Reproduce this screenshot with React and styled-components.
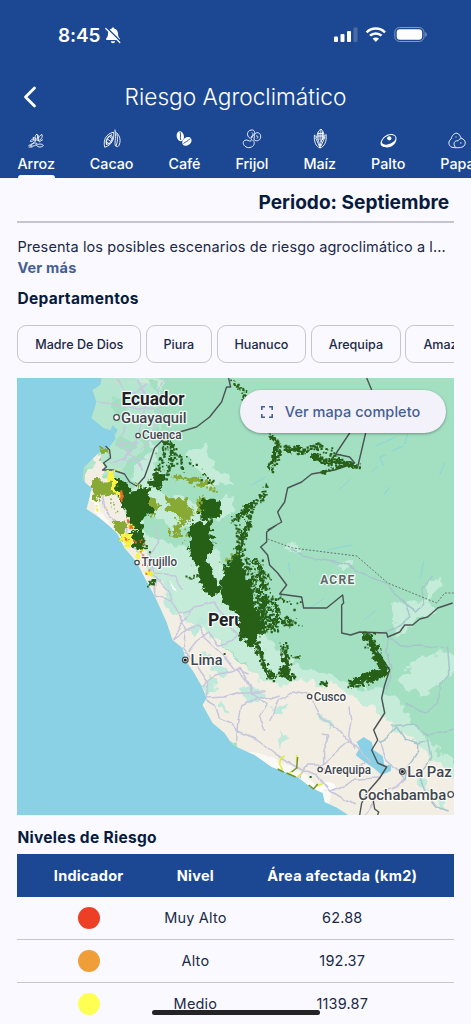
import styled, { createGlobalStyle } from "styled-components";

const crops = [
  { name: "Arroz", icon: "rice" },
  { name: "Cacao", icon: "cacao" },
  { name: "Café", icon: "coffee" },
  { name: "Frijol", icon: "bean" },
  { name: "Maíz", icon: "corn" },
  { name: "Palto", icon: "avocado" },
  { name: "Papa", icon: "potato" },
];

const departments = ["Madre De Dios", "Piura", "Huanuco", "Arequipa", "Amazonas"];

const levels = [
  { name: "Muy Alto", area: "62.88", color: "#ec3f25" },
  { name: "Alto", area: "192.37", color: "#f09e38" },
  { name: "Medio", area: "1139.87", color: "#ffff54" },
];

const icons = {
  rice: (
    <>
      <path d="M2.5 16.500c3-1 5-2.500 7-4.500M4.500 12.500c0-1.500 1.500-2.500 3.500-2.500-.5 2-2 3-3.500 2.500zM7 8.500c2 0 3 1.500 3 3.500-1.500 0-2.500-1.500-3-3.500zM10 10.500c-1.500-2-1-4 1-5.500 1.300 2 1 4-1 5.500zM12 12c0-3.500 1.500-5.500 4-6.500.8 3-.8 5-4 6.500zM4.500 17c2-3 4.500-3.500 6.500-2.500-1 2-3.500 3-6.500 2.500zM10.500 16.500c2-2 5-2 7 0-2 2-5 2-7 0zM13 13l4-2.500" />
      <path d="M2.5 18h4M12 6v6" />
    </>
  ),
  cacao: (
    <>
      <path d="M2.800 18.300C.8 11 4 5 11.500 3.200c1.300 7-2 13-8.700 15.100z" />
      <path d="M4.500 16c-.5-5 1-8 5.500-10.500M4.500 13l3 2M5.500 10l4 3M7.500 7.500l3.500 3" />
      <ellipse cx="7.2" cy="10.9" rx="2.3" ry="4.6" transform="rotate(28 7.2 10.9)" />
      <path d="M13 2.500c4.500 3 6 8 4.500 12.500-.8 3-2.500 3.200-4 2-1.500-3 1-7-.5-14.500zM14.800 4.500c1 4.500 1 8-.8 12.500M13 2.500V.5" />
    </>
  ),
  coffee: (
    <>
      <ellipse cx="6.3" cy="7.2" rx="3.6" ry="5" fill="currentColor" stroke="none" transform="rotate(-12 6.3 7.2)" />
      <ellipse cx="12.9" cy="12.4" rx="5.1" ry="3.8" fill="currentColor" stroke="none" transform="rotate(-36 12.9 12.4)" />
      <path d="M6 3c1.500 3-.5 5 .8 8M9.500 14.500c2-2 4-1.500 6.500-5" stroke="#1c4893" strokeWidth=".9" />
    </>
  ),
  bean: (
    <>
      <path d="M8 9.300C4.500 7 4.500 2 9 1c4-.6 4.500 3.300 2.500 5.200-1 1-1 1.800-1.800 2.800M12.300 6.500c1-4 5.500-3.500 6.300 0 .8 5-4 6.300-6.300 4.500-1-1.500.6-2.500 0-4.500zM9.500 11.800c-3 1.200-4-2-7-.3-3.300 2.500.5 8 5.500 7 4.500-1 5-4.500 3.500-7" />
      <path d="M10 3.500c1.500 1 1 2.500 0 3.500-1.500 1-1.500 3.500.5 4.500M14 7c1.800-.8 2.500 1.500 1 2.500" />
    </>
  ),
  corn: (
    <>
      <path d="M7 9C6.800 5 8.300 1.500 11 0c2.500 2 3.600 6 2.800 10M8.900 3.500V11M10.900.5V13M12.600 3v8M7.500 4.500h6M7 7h7" />
      <path d="M4.500 6c3 2 5 7 5.500 13-4-1.500-6.300-6-5.500-13zM16 5.500c-3.800 3-5.500 7.500-6 13.500 4.500-1.500 7-6.500 6-13.500zM5.500 8.500l4 9M15 8l-4 9" />
    </>
  ),
  avocado: (
    <>
      <path
        fill="currentColor"
        fillRule="evenodd"
        stroke="none"
        d="M2.600 15c-.4-3.300 2.800-8 7.400-9.600C14 4 18.500 5.400 18.500 9.600c0 5-4.300 8.800-9.300 8.800-3.600 0-6.400-1.100-6.600-3.400zM4 12.600c-.6 2.600 2.500 3.500 5.500 2.800 4.300-.9 8-3.400 8-6.200 0-2.800-3.500-3.900-7-2.700C7.500 7.500 4.800 9.500 4 12.600z"
      />
      <circle cx="11.3" cy="9.3" r="2.1" fill="currentColor" stroke="none" />
    </>
  ),
  potato: (
    <>
      <path d="M5 18.300c-4-1.600-4-6.500-.8-8.300.6-3.500 3-6 5.600-5.800 2.700.3 3.200 3.300 4.700 5.300 4.300.8 5 6 1.500 8.300-3 1.200-7.500 1.200-11 .5z" />
      <path d="M8.500 18.300c-3-3.500-1-7 2.500-6.500 1-1.600 2.400-2.200 3.500-2.300M8.500 8h1M13 14h1.500" />
    </>
  ),
};

// Small seeded generator so the scattered cells stay the same between renders
function random(seed) {
  let s = seed;
  return () => {
    s = (s * 16807) % 2147483647;
    return s / 2147483647;
  };
}

function scatter(points, spread, amount, seed) {
  const next = random(seed);
  let d = "";
  for (let i = 0; i < points.length - 1; i++) {
    const [x1, y1] = points[i];
    const [x2, y2] = points[i + 1];
    const count = Math.hypot(x2 - x1, y2 - y1) * amount;
    for (let j = 0; j < count; j++) {
      const t = next();
      const x = x1 + (x2 - x1) * t + (next() + next() - 1) * spread;
      const y = y1 + (y2 - y1) * t + (next() + next() - 1) * spread;
      const size = 0.9 + next() * 1.5;
      d += `M${x.toFixed(1)} ${y.toFixed(1)}h${size.toFixed(1)}v${size.toFixed(1)}h-${size.toFixed(1)}z`;
    }
  }
  return d;
}

const forest = [
  scatter([[167, 437], [162, 455], [153, 482]], 6, 1.5, 11),
  scatter([[169, 440], [172, 458], [167, 474], [153, 484]], 4, 1.8, 12),
  scatter([[170, 442], [183, 470]], 4, 1.2, 13),
  scatter([[188, 460], [214, 486]], 6, 0.5, 14),
  scatter([[233, 380], [244, 392], [246, 415], [268, 430], [278, 446]], 3, 1.2, 16),
  scatter([[278, 444], [277, 456], [270, 469]], 4, 2, 17),
  scatter([[284, 446], [302, 451], [320, 444]], 4, 2.2, 18),
  scatter([[312, 454], [327, 461], [346, 462], [358, 468]], 4, 2.4, 19),
  scatter([[322, 446], [340, 458]], 5, 1, 20),
  scatter([[320, 472], [345, 464]], 2, 1.5, 21),
  scatter([[264, 486], [263, 497], [249, 506], [234, 518]], 4, 1.8, 22),
  scatter([[251, 508], [248, 524], [240, 542], [229, 563]], 4, 1.2, 23),
  scatter([[235, 517], [240, 540], [240, 562]], 5, 1.2, 24),
  scatter([[244, 560], [252, 580], [256, 610], [254, 640]], 8, 2, 26),
  scatter([[256, 560], [264, 582], [261, 603], [266, 628]], 9, 2, 27),
  scatter([[263, 600], [281, 621], [297, 623]], 7, 1.2, 28),
  scatter([[268, 597], [297, 605]], 6, 0.8, 29),
  scatter([[250, 630], [275, 626]], 7, 3, 30),
  scatter([[257, 643], [263, 663], [272, 678]], 3, 2, 31),
  scatter([[283, 644], [287, 663], [280, 674], [294, 676]], 5, 2, 32),
  scatter([[272, 678], [284, 670]], 3, 1.5, 41),
  scatter([[285, 655], [300, 657]], 2, 0.9, 33),
  scatter([[366, 635], [376, 651], [381, 668]], 6, 2.2, 34),
  scatter([[385, 669], [370, 680], [350, 684]], 5, 2.5, 35),
  scatter([[321, 682], [326, 683]], 3, 3, 36),
  scatter([[137, 531], [144, 548]], 6, 1.5, 38),
  scatter([[149, 583], [154, 579]], 4, 2.5, 39),
  scatter([[188, 577], [201, 575]], 4, 1, 40),
].join("");

const olive = [
  scatter([[91, 483], [105, 487], [115, 491]], 7, 0.8, 51),
  scatter([[110, 500], [117, 510]], 4, 0.6, 52),
  scatter([[190, 480], [217, 490]], 5, 0.8, 59),
  scatter([[193, 510], [202, 497]], 5, 0.8, 60),
  scatter([[222, 560], [239, 552]], 3, 0.7, 61),
  scatter([[178, 515], [188, 540]], 6, 0.4, 62),
].join("");

const yellow = [
  scatter([[126, 535], [128, 545]], 4, 1.5, 72),
  scatter([[144, 571], [151, 575]], 4, 1.4, 74),
  scatter([[128, 525], [132, 527]], 3, 2, 75),
  scatter([[95, 508], [112, 514]], 5, 0.2, 76),
].join("");

const hot = [
  scatter([[121, 491], [121, 501]], 1.2, 2, 81),
  scatter([[126, 519], [132, 528]], 2, 0.6, 82),
  scatter([[123, 539], [143, 541]], 3, 0.6, 83),
  scatter([[142, 550], [149, 575]], 3, 0.3, 84),
].join("");

const coast =
  "M102 378L101 385 93 390 97 402 92 418 104 428 114 431 116 439 110 447 99 453 93 459 84 468 83 480 92 488 90 498 87 509 99 517 111 527 118 534 125 548 137 562 147 581 157 600 167 622 173 640 183 648 187 662 194 672 202 686 207 698 203 705 213 723 225 733 233 745 246 751 255 755 272 767 298 777 312 788 323 793 325 802 338 808 350 816H455V377z";

const roads = [
  "M118 378L124 390 136 392 146 383M138 378L148 403 141 425 137 444 125 458 111 463M165 378L158 393 161 411 150 440 140 450M124 427L122 443 130 453 140 460 144 472M97 402L117 404 137 410 155 408M126 460L148 460M119 445L139 443",
  "M85 487L101 492 104 505 110 517 127 530 132 545 151 563 153 575 169 592 180 613 186 630 184 648 194 661 209 683 206 700 216 706 220 719 232 724 238 731 256 738 276 754 299 768 318 776 331 791 354 805",
  "M155 527L160 540 150 555 156 574 175 576 183 591M158 580L153 596 173 600M173 640L181 625 194 607 204 605 216 602 223 614 229 627 240 636M180 613L194 609M173 640L185 631 199 625 205 638 223 655 234 669 246 679 253 693 271 700 280 697",
  "M189 651L197 641 209 632 219 645 231 641 245 632M202 686L216 676 238 670 250 674M207 698L225 697 241 692 267 692M239 724L242 706 258 697 267 704M270 720L280 700 293 691 308 694M267 703L260 716 265 731M239 724L238 741M253 692L246 676 239 668",
  "M308 694L320 716 337 727 350 742 361 750 370 764M350 741L334 755 323 765 308 765 300 778M323 735L329 736 323 751 323 766M350 705L352 720 349 735 354 748M320 769L344 770 365 763M331 791L347 785 354 779 381 778M365 815L380 793 396 787 405 779 397 769 386 758 381 742",
];

const inlandRoads =
  "M388 638L386 650 391 666 389 690M388 638L401 646 421 645 435 647 448 648 450 674 440 686 439 703 425 713 407 703M397 727L387 738 379 742M397 727L405 739 419 743 419 751 409 766 405 779M391 726L415 724 428 735 442 732 454 729M290 550L318 559 349 565 362 573 386 583 405 604 410 616 399 625 378 634M402 603L417 612 425 603 423 586 433 576M419 743L429 740 432 758 418 775 425 792 437 807 449 811";

const border =
  "M106 446l4 4 1 8-7 5 3 4-4 3 10 0 12 4 5 8 7 4 8-9 5-14 5-15 8-8 17-8 17-5 13-10 12-15 5-15 4 0-2-9M268 530l14-8-4-10 7-10 3-14 14-6 10-8 23-4 20-7-5-6-14-3 16-24M358 467l8-34M367 378l5 12M277 525l-10 7 0 10-6 5 7 8 2 10 8 8 9 12-7 9 22 3 2 11 23 0 16-13 1 8-2 2 0 28 9 2 9-3 27 1 1 4 12-5 5-7 8 0 7-6 8-2 10-9 15-5M368 632l10 20 12 18-5 15-3 13 3 15-11 17 4 10-6 10 6 13 9 4-7 11-12 14-6 11-2 12M373 797l2 12 4 3-1 3";

const cities = [
  { name: "Guayaquil", x: 121.5, y: 423, size: 15.5, width: 65.5, dot: [117, 417.5] },
  { name: "Cuenca", x: 142.5, y: 439, size: 12.3, width: 39.5, dot: [138.5, 435.5] },
  { name: "Trujillo", x: 142, y: 566.5, size: 12.3, width: 35.5, dot: [137.5, 562.5] },
  { name: "Lima", x: 191, y: 665, size: 15.5, width: 32, dot: [185.7, 660], capital: true },
  { name: "Cusco", x: 314, y: 701, size: 12.3, width: 32.5, dot: [310, 696.5] },
  { name: "Arequipa", x: 324.5, y: 774, size: 12.3, width: 47, dot: [320.5, 769.5] },
  { name: "La Paz", x: 407.5, y: 777.5, size: 15.5, width: 44.5, dot: [402.7, 771.5], capital: true },
  { name: "Cochabamba", x: 358.5, y: 800.5, size: 15.5, width: 88, dot: [451, 794.5] },
];

function RiskMap() {
  return (
    <MapSvg viewBox="17.5 378 436 437" preserveAspectRatio="none">
      <defs>
        <filter id="rough" x="-5%" y="-5%" width="110%" height="110%">
          <feTurbulence type="fractalNoise" baseFrequency="0.14" numOctaves="4" seed="4" />
          <feDisplacementMap in="SourceGraphic" scale="14" xChannelSelector="R" yChannelSelector="G" />
        </filter>
        <filter id="soft" x="-5%" y="-5%" width="110%" height="110%">
          <feTurbulence type="fractalNoise" baseFrequency="0.07" numOctaves="3" seed="9" />
          <feDisplacementMap in="SourceGraphic" scale="18" xChannelSelector="R" yChannelSelector="G" />
        </filter>
        <filter id="winding" x="-5%" y="-5%" width="110%" height="110%">
          <feTurbulence type="fractalNoise" baseFrequency="0.06" numOctaves="2" seed="7" />
          <feDisplacementMap in="SourceGraphic" scale="6" xChannelSelector="R" yChannelSelector="G" />
        </filter>
        <clipPath id="land">
          <path d={coast} />
        </clipPath>
      </defs>
      <path fill="#8ad1e6" d="M17 378h437v437H17z" />
      <path fill="#a3e0c2" d={coast} />
      <g clipPath="url(#land)">
        <g filter="url(#soft)">
          <path fill="#b4e5cf" d="M80 375h75l3 30-18 45-25 30-40-15z" />
          <path fill="#c4ecd9" d="M136 375h26l-4 45-8 30-20 28 8 28-30-10 16 90 42 40 80 75 125 40 32 12 76 62v-25l-50-50-33-45-65-18-43-20-30-32-34-62-25-42-38-28-8-60 10-40z" />
          <path fill="#c4ecd9" d="M391 605l18-5 15 4 5-24 12-6 2 13-14 14 8 12-18 5-13 15-10 3-2-14zM400 680l12-15 24-13 18 3v18l-20 12-12 13zM283 547l16-2 2 7-14 2zM338 565l14-3 2 8-10 1z" />
          <path fill="#c4ecd9" d="M160 500l28-3 22 18-2 38-18-8-22-24zM187 455l20-10 8 25 25 12-28 5zM216 500l18-4-4 18-12 6z" />
          <path fill="#a3e0c2" d="M132 500l18 15 15 2 8 16 12-8 10 15-15 8-22-10-18-14zM206 647l14-6 28 24-18-2zM290 705l12 6-3 14-10-10zM150 378h10l-4 16-6-2zM112 400l14-6 4 20-10 8zM120 436l16 4-4 12-14-4z" />
          <path fill="#f3eee3" d="M95 452l7 5 4 25 13 20 15 32 12 27 17 23 10 25 14 10 14 9 17 12 20 18 22 22 30 6 18-3 22 2 25 12 20 12 15 16 26 17 26 25 24 20v40H330l-120-100-75-145-58-70z" />
          <path fill="#bfeadb" d="M166 582l8 8 7 22-8 3-10-16zM185 632l17-14 5 4-12 15zM204 655l16 3 12 16-8 7-17-17zM206 673l7 6 4 17-9-6zM240 688l20 2 6 9-14 4zM272 709l14-8-2 10zM277 730l12 10-8 3zM318 710l18 13-3 5-13-10zM222 703l8 7-3 5zM412 775l13 4 2 12-8-4zM428 790l17 10-3 10z" />
          <path fill="#faf9f5" d="M82 486l12 8 14 28 15 20 6 20 12 8 8 28 8 21 9 14 1 28 17 18 7 24 16 21 28 26 45 8 28 20 22 18 11 25h-25L190 710l-75-140z" />
          <path fill="#fff" d="M170 581l6 3 3 8-5-1zM315 785l14-3 6 9-12 3z" />
        </g>
        <path fill="#8ad1e6" d="M357 742l7-5 8 5 2 8 9 6 2 10 7-2-1 7-9 4-8-7-12-8-6-5 4-7zM113 425l-4 10 5 3 4-8z" />
        <path
          fill="none"
          stroke="#87d2dd"
          strokeWidth=".9"
          d="M340 489l11-10M384 466l-4-9 6-2M372 472l6-6M392 451l12-5M376 446l20-9M405 444l4-13M440 475l5-12M390 487l-6 8M310 608l14-9M364 620l13-10M328 550l24-5M290 572l-1-10M252 485l14-8M421 577l3-16M438 414l7 6"
        />
        <g fill="none" strokeLinejoin="round" filter="url(#winding)">
          <path stroke="#c6c6dc" strokeWidth="1.5" d={roads.join("")} />
          <path stroke="#a6c6cb" strokeWidth="1.5" d={inlandRoads} />
        </g>
      </g>
      <path fill="none" stroke="#606968" strokeWidth=".9" strokeDasharray="2 1.6" d="M268 539l25 9 64 8 31 27 49 20 8-10h9" />
      <path fill="none" stroke="#4b5355" strokeWidth="1.4" strokeLinejoin="round" d={border} />

      <MapLabel x="208.5" y="626" $size={17.5} $bold textLength="36">
        Perú
      </MapLabel>

      <g filter="url(#rough)">
        <path
          fill="#89a935"
          d="M89 482l10-4 16 9 6 12-14-5-7 3-1 6-7-2 2-10zM100 449l9-1 2 6-9 3zM138 483l11 10 12 14-6 7-10-8-5-10zM168 497l20 2 6 16-6 8-12-8-9-10zM172 474l18 3 19 2 7 9-10-4-16-2-18-3zM110 520l18 3-3 18-12-15zM172 524l14-6-5 17-10 3zM196 502l8-6 2 6-8 10z"
        />
        <path
          fill="#286019"
          d="M114 478l14 3 3 12 13-8 7 12 1 15-12 9 6 12-3 8-14-20-6-14-8-16zM130 532l12 2 5 13-6 5-8-8zM202 501l16-3 4 18-13 7-11-10zM192 521l20 2 2 23-8 14 14 26-3 9-16-4 2-8-10-22-5-16zM152 477l10-6 6 6-8 10-12 1z"
        />
        <path
          fill="#286019"
          d="M234 556l10 6 2 14 8 8 0 22 12 14-4 14-12 12-10-7-1-13-3-16-10-6-6-14 4-18 4-8zM362 634l10 1 6 14 12 19-4 8-16 4-18 7-3-6 14-8 16-4-4-14z"
        />
        <path fill="none" stroke="#286019" strokeWidth="4" d="M273 435l5 10-4 12-5 12M286 448l14 3M312 455l14 8 14-1 16 6M236 518l15-13M236 558l7-16 5-21M258 645l6 19 8 12M286 650l3 15-7 9 12 2" />
        <path fill="none" stroke="#286019" strokeWidth="3" d="M254 560l8 15-4 14 8 12-5 12 12 6-4 10M262 600l16 8-2 12 18 2" />
        <path fill="#f9f443" d="M108 469l10 1-3 12 8 15-5 2-10-17zM121 533l11 2-4 13zM134 553l11-6 1 3-9 7z" />
      </g>
      <path fill="#89a935" d={olive} />
      <path fill="#286019" d={forest} />
      <path fill="#f4ee36" d={yellow} />
      <path fill="#ef6b30" d={hot} />
      <g fill="none" strokeWidth="1.5" strokeLinejoin="round">
        <path stroke="#e3ee35" d="M285 756l-4 2-1 6 3 6M297 755v7M294 770l-4 3M298 777l4-4M317 786l6-2" />
        <path stroke="#70922d" d="M298 757l-1 11-5 4M278 769l6 3M287 773l9 4M309 785l5 4 4-5" />
        <path stroke="#286019" strokeWidth="2" d="M310 777h2M224 654h2" />
      </g>

      <MapLabel x="122" y="405.5" $size={17.5} $bold textLength="63" lengthAdjust="spacingAndGlyphs">
        Ecuador
      </MapLabel>
      <MapLabel x="320.5" y="584.5" $size={12} $bold $muted textLength="34">
        ACRE
      </MapLabel>
      {cities.map((city) => (
        <g key={city.name}>
          <circle cx={city.dot[0]} cy={city.dot[1]} r={city.size > 13 ? 2.8 : 2.2} fill="#fff" stroke="#4a4e52" strokeWidth="1.3" />
          {city.capital && <circle cx={city.dot[0]} cy={city.dot[1]} r="1.6" fill="#202124" />}
          <MapLabel x={city.x} y={city.y} $size={city.size} textLength={city.width} lengthAdjust="spacingAndGlyphs">
            {city.name}
          </MapLabel>
        </g>
      ))}
    </MapSvg>
  );
}

function App() {
  return (
    <>
      <GlobalStyle />
      <Screen>
        <Header>
          <StatusBar>
            <Clock>
              8:45
              <svg width="16" height="17" viewBox="0 0 16 17">
                <path fill="#fff" d="M8 .5c.8 0 1.300.5 1.300 1.200C11.700 2.200 12.800 4 13 6.500c.1 3 .8 4 1.800 5 .5.700.2 1.500-.8 1.500H2c-1 0-1.300-.8-.8-1.500 1-1 1.700-2 1.800-5C3.200 4 4.300 2.200 6.700 1.700 6.700 1 7.200.5 8 .5zM5.800 14.300h4.400c-.2 1.200-1 2-2.200 2s-2-.8-2.200-2z" />
                <path stroke="#1c4893" strokeWidth="1.6" d="M2 1l14 14" />
                <path stroke="#fff" strokeWidth="1.2" strokeLinecap="round" d="M.8 1.500l14 14" />
              </svg>
            </Clock>
            <svg width="93" height="18" viewBox="0 0 93 18">
              <g fill="#fff">
                <rect x="0" y="10.5" width="4" height="5.5" rx="1" />
                <rect x="6.5" y="8" width="4" height="8" rx="1" />
                <rect x="13" y="5" width="4" height="11" rx="1" />
                <rect x="19.5" y="1.5" width="4" height="14.5" rx="1" opacity=".2" />
              </g>
              <g fill="none" stroke="#fff" strokeWidth="2.5">
                <path d="M32.600 6.300c5.200-5 13.200-5 18.400 0" />
                <path d="M36 9.700c3.300-3 8.300-3 11.600 0" />
              </g>
              <path fill="#fff" d="M38.600 12.600c1.900-1.600 4.500-1.600 6.400 0L41.800 16z" />
              <rect x="60.8" y="1.5" width="29.2" height="14" rx="4.8" fill="none" stroke="#7f9ac4" />
              <rect x="62.7" y="3.3" width="25.4" height="10.4" rx="3.2" fill="#fff" />
              <path fill="#7f9ac4" d="M91.300 6v5c1.900-.8 1.900-4.200 0-5z" />
            </svg>
          </StatusBar>
          <TitleBar>
            <BackButton aria-label="Volver">
              <svg width="14" height="22" viewBox="0 0 14 22" fill="none" stroke="#fff" strokeWidth="2.8" strokeLinecap="round" strokeLinejoin="round">
                <path d="M11.500 2L2.500 11l9 9" />
              </svg>
            </BackButton>
            <Title>Riesgo Agroclimático</Title>
          </TitleBar>
          <Tabs>
            {crops.map((crop, index) => (
              <Tab key={crop.name} $active={index === 0}>
                <svg width="20" height="20" viewBox="0 0 20 20" fill="none" stroke="currentColor" strokeWidth=".9" strokeLinejoin="round">
                  {icons[crop.icon]}
                </svg>
                <span>{crop.name}</span>
              </Tab>
            ))}
          </Tabs>
        </Header>
        <Content>
          <Period>Periodo: Septiembre</Period>
          <Description>Presenta los posibles escenarios de riesgo agroclimático a l...</Description>
          <MoreLink>Ver más</MoreLink>
          <SectionTitle>Departamentos</SectionTitle>
          <Chips>
            {departments.map((name) => (
              <Chip key={name}>{name}</Chip>
            ))}
          </Chips>
          <MapPanel>
            <RiskMap />
            <FullMapButton>
              <svg width="12" height="12" viewBox="0 0 12 12" fill="none" stroke="currentColor" strokeWidth="1.6">
                <path d="M.8 4V.8H4M8 .8h3.200V4M11.200 8v3.200H8M4 11.200H.8V8" />
              </svg>
              Ver mapa completo
            </FullMapButton>
          </MapPanel>
          <LevelsTitle>Niveles de Riesgo</LevelsTitle>
          <TableHead>
            <span>Indicador</span>
            <span>Nivel</span>
            <span>Área afectada (km2)</span>
          </TableHead>
          {levels.map((level) => (
            <TableRow key={level.name}>
              <Indicator $color={level.color} />
              <span>{level.name}</span>
              <span>{level.area}</span>
            </TableRow>
          ))}
        </Content>
        <HomeBar />
      </Screen>
    </>
  );
}

const GlobalStyle = createGlobalStyle`
  * {
    box-sizing: border-box;
  }
  body {
    margin: 0;
    background: #faf9ff;
    overflow: hidden;
  }
`;

const Screen = styled.div`
  position: relative;
  width: 471px;
  height: 1024px;
  overflow: hidden;
  background: #faf9ff;
  color: #1b2946;
  font-family: Inter, sans-serif;
`;

const Header = styled.header`
  height: 177.5px;
  background: #1c4893;
  color: #fff;
  overflow: hidden;
`;

const StatusBar = styled.div`
  display: flex;
  justify-content: space-between;
  align-items: center;
  height: 70px;
  padding: 0 44px 0 58px;
`;

const Clock = styled.div`
  display: flex;
  align-items: center;
  gap: 4.5px;
  font-size: 19px;
  font-weight: 600;
  letter-spacing: -0.15px;
`;

const TitleBar = styled.div`
  display: grid;
  grid-template-columns: 60px 1fr 60px;
  align-items: center;
  height: 54px;
`;

const BackButton = styled.button`
  display: flex;
  padding: 0 0 0 23px;
  border: 0;
  background: none;
`;

const Title = styled.h1`
  margin: 0;
  padding-bottom: 2px;
  text-align: center;
  font-size: 22.7px;
  font-weight: 350;
`;

const Tabs = styled.nav`
  display: flex;
  gap: 35px;
  padding: 5px 0 0 17.5px;
`;

const Tab = styled.div`
  display: flex;
  flex: none;
  flex-direction: column;
  align-items: center;
  height: 48.5px;
  font-size: 14.3px;
  font-weight: 500;
  letter-spacing: -0.03px;
  span {
    margin-top: 6px;
    line-height: 18px;
  }
  &::after {
    content: "";
    width: 100%;
    height: 3px;
    margin-top: auto;
    border-radius: 3px 3px 0 0;
    background: ${({ $active }) => ($active ? "#fff" : "transparent")};
  }
`;

const Content = styled.main`
  display: flex;
  flex-direction: column;
  padding: 0 17.4px;
`;

const Period = styled.h2`
  height: 45.5px;
  margin: 0;
  padding: 11px 4.5px 0 0;
  border-bottom: 2px solid #c4c5d0;
  color: #071b3d;
  font-size: 19.1px;
  font-weight: 700;
  line-height: 26px;
  text-align: right;
`;

const Description = styled.p`
  margin: 13px 0 0;
  font-size: 14.5px;
  line-height: 21px;
  letter-spacing: 0.1px;
  white-space: nowrap;
`;

const MoreLink = styled.a`
  color: #455e94;
  font-size: 14.5px;
  font-weight: 700;
  line-height: 21px;
  letter-spacing: 0.2px;
`;

const SectionTitle = styled.h3`
  margin: 10px 0 0;
  color: #071b3d;
  font-size: 15.5px;
  font-weight: 700;
  line-height: 22px;
  letter-spacing: 0.3px;
`;

const Chips = styled.div`
  display: flex;
  gap: 4.5px;
  margin-top: 15px;
  overflow: hidden;
`;

const Chip = styled.button`
  flex: none;
  height: 38px;
  padding: 0 16.9px;
  border: 1px solid #c5c6d0;
  border-radius: 9px;
  background: transparent;
  color: #1b2946;
  font-family: inherit;
  font-size: 12.55px;
  font-weight: 500;
`;

const MapPanel = styled.div`
  position: relative;
  height: 437px;
  margin-top: 15px;
`;

const MapSvg = styled.svg`
  display: block;
  width: 100%;
  height: 100%;
`;

const MapLabel = styled.text`
  font-family: Roboto, sans-serif;
  font-size: ${({ $size }) => $size}px;
  font-weight: ${({ $bold }) => ($bold ? 700 : 500)};
  fill: ${({ $muted, $bold }) => ($muted ? "#5c6866" : $bold ? "#202124" : "#41464c")};
  stroke: rgba(255, 255, 255, 0.85);
  stroke-width: 2.5px;
  stroke-linejoin: round;
  paint-order: stroke;
`;

const FullMapButton = styled.button`
  position: absolute;
  top: 12px;
  right: 7.5px;
  display: flex;
  align-items: center;
  justify-content: center;
  gap: 12px;
  width: 206px;
  height: 43px;
  padding: 0 5px 0 0;
  border: 0;
  border-radius: 22px;
  background: #f3f2fa;
  box-shadow: 0 1px 3px rgba(0, 0, 0, 0.35);
  color: #455e94;
  font-family: inherit;
  font-size: 14.5px;
  font-weight: 500;
  letter-spacing: 0.06px;
`;

const LevelsTitle = styled(SectionTitle)`
  margin-top: 12px;
`;

const TableRow = styled.div`
  display: grid;
  grid-template-columns: 142.5px 71px 1fr;
  place-items: center;
  height: 43px;
  border-bottom: 1px solid #c5c6d0;
  font-size: 14.5px;
  letter-spacing: 0.18px;
  white-space: nowrap;
`;

const TableHead = styled(TableRow)`
  height: 43px;
  margin-top: 4.5px;
  border-bottom: 0;
  background: #1c4893;
  color: #fff;
  font-weight: 700;
  letter-spacing: 0.28px;
`;

const Indicator = styled.div`
  width: 22px;
  height: 22px;
  border-radius: 50%;
  background: ${({ $color }) => $color};
`;

const HomeBar = styled.div`
  position: absolute;
  bottom: 9px;
  left: 151.5px;
  width: 168px;
  height: 5.5px;
  border-radius: 3px;
  background: #242426;
`;

export default App;
